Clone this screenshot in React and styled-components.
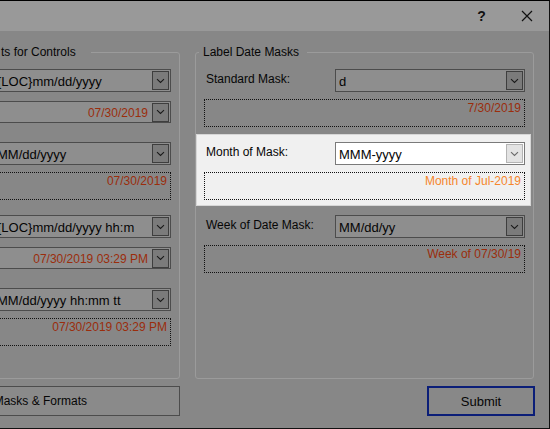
import React from 'react'
import styled, { createGlobalStyle } from 'styled-components'

const GlobalStyle = createGlobalStyle`
  html, body {
    margin: 0;
    padding: 0;
    background: #878787;
    overflow: hidden;
  }
  body {
    font-family: "Liberation Sans", Arial, sans-serif;
    color: #060606;
  }
`;

const Window = styled.div`
  width: 550px;
  height: 429px;
  box-sizing: border-box;
  border-top: 1px solid #000;
  border-right: 1px solid #111;
  border-bottom: 1px solid #111;
  background: #878787;
  display: flex;
  flex-direction: column;
  overflow: hidden;
`;

const TitleBar = styled.div`
  height: 30px;
  flex: none;
  background: #999999;
  display: flex;
  justify-content: flex-end;
  align-items: center;
`;

const TitleButton = styled.div`
  width: 45px;
  height: 30px;
  display: flex;
  align-items: center;
  justify-content: center;
  font-size: 14px;
  font-weight: bold;
  color: #111;
`;

const Columns = styled.div`
  display: flex;
  gap: 15px;
  margin-left: -159px;
  padding-top: 14px;
`;

const Column = styled.div`
  width: 339px;
  flex: none;
  display: flex;
  flex-direction: column;
  gap: 7px;
`;

const GroupBox = styled.fieldset`
  margin: 0;
  min-width: 0;
  height: 334px;
  box-sizing: border-box;
  padding: 10px 8px 0 8px;
  border: 1px solid #9b9b9b;
  border-radius: 3px;
  display: flex;
  flex-direction: column;
`;

const GroupTitle = styled.legend`
  font-size: 12px;
  line-height: 14px;
  padding: 0 ${(p) => p.$trail}px 0 4px;
  margin-left: ${(p) => p.$indent}px;
  color: #060606;
`;

const Combo = styled.div`
  height: 23px;
  box-sizing: border-box;
  margin-top: ${(p) => p.$top || 0}px;
  border: 1px solid ${(p) => (p.$light ? '#7a7a7a' : '#4c4c4c')};
  background: ${(p) => (p.$light ? '#ffffff' : '#8e8e8e')};
  display: flex;
  align-items: center;
  padding-left: 3px;
  font-size: 13px;
  color: #050505;
  white-space: nowrap;
  overflow: hidden;
  ${(p) => (p.$wide ? 'flex: 1;' : 'width: 178px; align-self: flex-end;')}
`;

const ComboText = styled.span`
  flex: 1;
  overflow: hidden;
  padding-top: 1px;
`;

const Picker = styled(Combo)`
  height: 22px;
  font-size: 12px;
  color: #9b2d0c;
`;

const PickerText = styled.span`
  flex: 1;
  text-align: right;
  padding-right: 4px;
  padding-top: 1px;
`;

const DropButton = styled.div`
  width: 17px;
  height: 19px;
  box-sizing: border-box;
  margin-right: 1px;
  flex: none;
  border: 1px solid ${(p) => (p.$light ? '#b4b4b4' : '#3e3e3e')};
  background: ${(p) => (p.$light ? '#e3e3e3' : '#7b7b7b')};
  display: flex;
  align-items: center;
  justify-content: center;
`;

const Readout = styled.div`
  height: 28px;
  box-sizing: border-box;
  margin-top: 7px;
  border: 1px dotted #111;
  padding: 1px 3px 0 3px;
  text-align: right;
  font-size: 12px;
  line-height: 14px;
  color: ${(p) => (p.$light ? '#f5862c' : '#9b2d0c')};
`;

const FieldRow = styled.div`
  display: flex;
  margin-top: ${(p) => p.$top || 0}px;
`;

const FieldLabel = styled.div`
  width: 129px;
  flex: none;
  padding: 3px 0 0 2px;
  font-size: 12px;
  color: #060606;
`;

const Spotlight = styled.div`
  margin: 7px -6px 0 -8px;
  padding: 7px 5px 5px 7px;
  border: 1px solid #d6d6d6;
  background: #f0f0f0;
`;

const WideButton = styled.div`
  height: 30px;
  box-sizing: border-box;
  border: 1px solid #4c4c4c;
  background: #8a8a8a;
  display: flex;
  align-items: center;
  justify-content: flex-end;
  padding-right: 92px;
  font-size: 12px;
  color: #060606;
`;

const SubmitButton = styled.div`
  width: 108px;
  height: 30px;
  box-sizing: border-box;
  align-self: flex-end;
  margin-right: -1px;
  border: 2px solid #0b1e78;
  background: #888888;
  display: flex;
  align-items: center;
  justify-content: center;
  font-size: 13px;
  color: #060606;
`;

function Chevron({ light }) {
  return (
    <svg width="9" height="6" viewBox="0 0 9 6">
      <path d="M1 1.2 L4.5 4.5 L8 1.2" fill="none" stroke={light ? '#6a6a6a' : '#1a1a1a'} strokeWidth="1.1" />
    </svg>
  );
}

function CloseGlyph() {
  return (
    <svg width="12" height="12" viewBox="0 0 12 12">
      <path d="M1 1 L11 11 M11 1 L1 11" stroke="#111" strokeWidth="1.2" />
    </svg>
  );
}

function MaskCombo({ text, top, wide, light }) {
  return (
    <Combo $top={top} $wide={wide} $light={light}>
      <ComboText>{text}</ComboText>
      <DropButton $light={light}>
        <Chevron light={light} />
      </DropButton>
    </Combo>
  );
}

function DatePicker({ value, top }) {
  return (
    <Picker $top={top}>
      <PickerText>{value}</PickerText>
      <DropButton>
        <Chevron />
      </DropButton>
    </Picker>
  );
}

export default function App() {
  return (
    <>
      <GlobalStyle />
      <Window>
        <TitleBar>
          <TitleButton>?</TitleButton>
          <TitleButton>
            <CloseGlyph />
          </TitleButton>
        </TitleBar>
        <Columns>
          <Column>
            <GroupBox>
              <GroupTitle $indent={147} $trail={15}>ts for Controls</GroupTitle>
              <MaskCombo text="{LOC}mm/dd/yyyy" />
              <DatePicker value="07/30/2019" top={9} />
              <MaskCombo text="MM/dd/yyyy" top={19} />
              <Readout>07/30/2019</Readout>
              <MaskCombo text="{LOC}mm/dd/yyyy hh:m" top={15} />
              <DatePicker value="07/30/2019 03:29 PM" top={9} />
              <MaskCombo text="MM/dd/yyyy hh:mm tt" top={19} />
              <Readout>07/30/2019 03:29 PM</Readout>
            </GroupBox>
            <WideButton>Masks &amp; Formats</WideButton>
          </Column>
          <Column>
            <GroupBox>
              <GroupTitle $indent={-5} $trail={8}>Label Date Masks</GroupTitle>
              <FieldRow>
                <FieldLabel>Standard Mask:</FieldLabel>
                <MaskCombo text="d" wide />
              </FieldRow>
              <Readout>7/30/2019</Readout>
              <Spotlight>
                <FieldRow>
                  <FieldLabel>Month of Mask:</FieldLabel>
                  <MaskCombo text="MMM-yyyy" wide light />
                </FieldRow>
                <Readout $light>Month of Jul-2019</Readout>
              </Spotlight>
              <FieldRow $top={9}>
                <FieldLabel>Week of Date Mask:</FieldLabel>
                <MaskCombo text="MM/dd/yy" wide />
              </FieldRow>
              <Readout>Week of 07/30/19</Readout>
            </GroupBox>
            <SubmitButton>Submit</SubmitButton>
          </Column>
        </Columns>
      </Window>
    </>
  );
}
